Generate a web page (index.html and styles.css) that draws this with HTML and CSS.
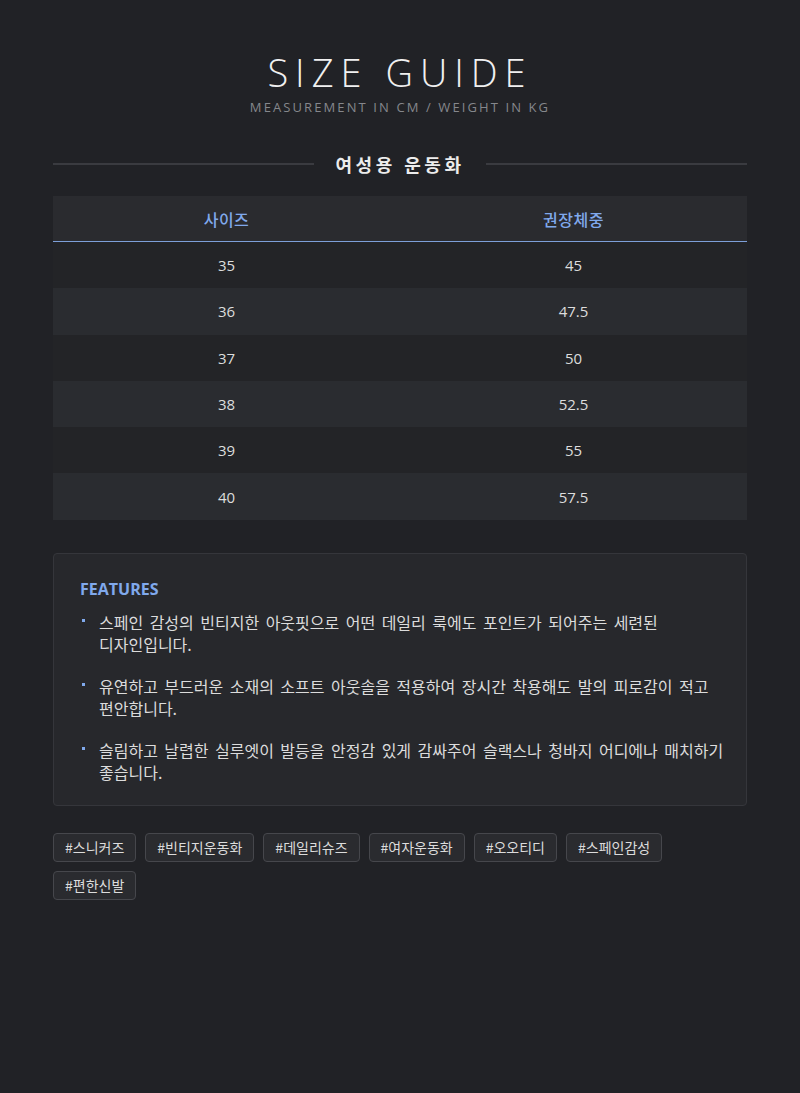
FILE: index.html
```html
<!DOCTYPE html>
<html lang="ko">
<head>
<meta charset="utf-8">
<link rel="stylesheet" href="styles.css">
</head>
<body>
<main class="page">
  <header class="hero">
    <h1 class="title">SIZE GUIDE</h1>
    <p class="subtitle">MEASUREMENT IN CM / WEIGHT IN KG</p>
  </header>

  <div class="section-head">
    <span class="line"></span>
    <h2 class="section-title">여성용 운동화</h2>
    <span class="line"></span>
  </div>

  <table class="size-table">
    <thead>
      <tr><th>사이즈</th><th>권장체중</th></tr>
    </thead>
    <tbody>
      <tr><td>35</td><td>45</td></tr>
      <tr><td>36</td><td>47.5</td></tr>
      <tr><td>37</td><td>50</td></tr>
      <tr><td>38</td><td>52.5</td></tr>
      <tr><td>39</td><td>55</td></tr>
      <tr><td>40</td><td>57.5</td></tr>
    </tbody>
  </table>

  <section class="features">
    <h3 class="features-title">FEATURES</h3>
    <ul class="feature-list">
      <li>스페인 감성의 빈티지한 아웃핏으로 어떤 데일리 룩에도 포인트가 되어주는 세련된 디자인입니다.</li>
      <li>유연하고 부드러운 소재의 소프트 아웃솔을 적용하여 장시간 착용해도 발의 피로감이 적고 편안합니다.</li>
      <li>슬림하고 날렵한 실루엣이 발등을 안정감 있게 감싸주어 슬랙스나 청바지 어디에나 매치하기 좋습니다.</li>
    </ul>
  </section>

  <div class="tags">
    <span class="tag">#스니커즈</span>
    <span class="tag">#빈티지운동화</span>
    <span class="tag">#데일리슈즈</span>
    <span class="tag">#여자운동화</span>
    <span class="tag">#오오티디</span>
    <span class="tag">#스페인감성</span>
    <span class="tag">#편한신발</span>
  </div>
</main>
</body>
</html>
```

FILE: styles.css
```css
html, body {
  margin: 0;
  padding: 0;
  background: #212226;
}
body {
  font-family: "Open Sans", "Noto Sans CJK KR", sans-serif;
  color: #dcdcdc;
}
.page {
  width: 694px;
  margin: 0 auto;
  padding: 48px 0 40px;
}
.hero {
  text-align: center;
}
.title {
  margin: 0;
  font-weight: 300;
  font-size: 38px;
  line-height: 48px;
  letter-spacing: 7px;
  color: #f0f0f0;
}
.subtitle {
  margin: 2px 0 0;
  font-size: 13px;
  line-height: 18px;
  letter-spacing: 2.1px;
  color: #85878c;
}
.section-head {
  display: flex;
  align-items: center;
  gap: 22px;
  margin-top: 36px;
}
.line {
  flex: 1;
  height: 2px;
  background: #3a3b40;
}
.section-title {
  margin: 0;
  font-size: 18px;
  font-weight: 700;
  line-height: 24px;
  letter-spacing: 3.5px;
  color: #ececec;
  font-family: "Noto Sans CJK KR", sans-serif;
}
.size-table {
  width: 100%;
  border-collapse: collapse;
  margin-top: 20px;
  table-layout: fixed;
}
.size-table th {
  height: 45px;
  background: #2a2b2f;
  color: #80a9ec;
  font-weight: 500;
  font-size: 16px;
  letter-spacing: 0.5px;
  font-family: "Noto Sans CJK KR", sans-serif;
  border-bottom: 1px solid #7d9fd8;
  padding: 0;
}
.size-table td {
  height: 46.3px;
  text-align: center;
  font-size: 15px;
  color: #dddddd;
  padding: 0;
  background: #232427;
}
.size-table tbody tr:nth-child(even) td {
  background: #2a2c30;
}
.features {
  margin-top: 33px;
  background: #27282c;
  border: 1px solid #35363b;
  border-radius: 4px;
  padding: 23px 20px 22px 26px;
}
.features-title {
  margin: 0;
  font-size: 16px;
  font-weight: 700;
  line-height: 24px;
  color: #80a9ec;
}
.feature-list {
  list-style: none;
  margin: 10px 0 0;
  padding: 0;
  font-family: "Noto Sans CJK KR", sans-serif;
}
.feature-list li {
  position: relative;
  padding-left: 19px;
  font-size: 16px;
  line-height: 22px;
  word-spacing: 2px;
  word-break: keep-all;
  color: #dcdcdc;
}
.feature-list li + li {
  margin-top: 20px;
}
.feature-list li::before {
  content: "";
  position: absolute;
  left: 2px;
  top: 8px;
  width: 3px;
  height: 3px;
  background: #80a9ec;
}
.tags {
  display: flex;
  flex-wrap: wrap;
  gap: 9px 9px;
  margin-top: 27px;
}
.tag {
  font-family: "Noto Sans CJK KR", sans-serif;
  font-size: 14px;
  line-height: 27px;
  padding: 0 11px;
  background: #2a2b2f;
  border: 1px solid #46474c;
  border-radius: 4px;
  color: #dcdcdc;
}
```
